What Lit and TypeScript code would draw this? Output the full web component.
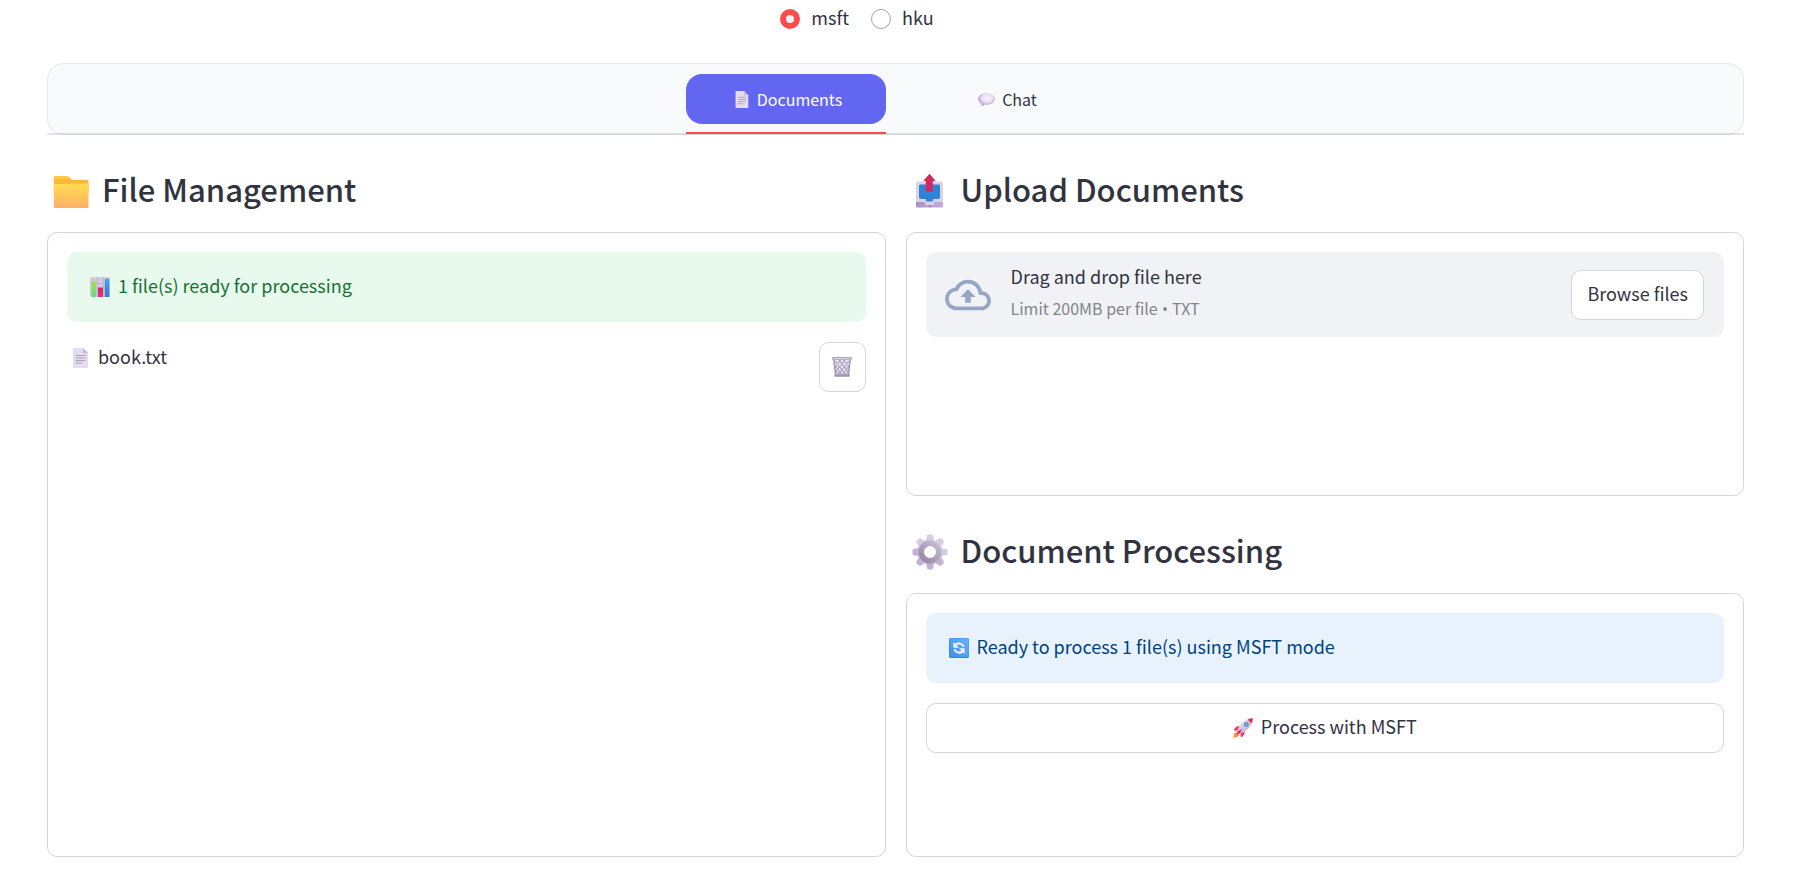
import { LitElement, html, css, svg } from "lit";
import { customElement, state } from "lit/decorators.js";
import { classMap } from "lit/directives/class-map.js";

const pageIcon = html`<svg class="icon" viewBox="0 0 20 20" aria-hidden="true">
  <path d="M3 0h10l5 5v15H3z" fill="#e6dcf0" />
  <path d="M13 0l5 5h-5z" fill="#c6bcd0" />
  <path d="M6 7.500h9M6 10h9M6 12.500h9M6 15h5.500" stroke="#aba0b6" stroke-width="1" stroke-linecap="round" />
</svg>`;

const bubbleIcon = html`<svg class="icon" viewBox="0 0 20 20" aria-hidden="true">
  <defs>
    <radialGradient id="bubble" cx=".55" cy=".4" r=".62">
      <stop offset="0" stop-color="#f8f2fc" /><stop offset=".5" stop-color="#e9dff3" /><stop offset="1" stop-color="#a78fd0" />
    </radialGradient>
  </defs>
  <path d="M10 2.500c5.400 0 9.800 2.800 9.800 6.800s-4.400 6.800-9.800 6.800c-.8 0-1.600 0-2.300-.2-.9 1-2.300 1.800-3.700 1.700.4-.7.6-1.700.4-2.700C1.800 13.700.2 11.800.2 9.300.2 5.300 4.600 2.500 10 2.500z" fill="url(#bubble)" />
</svg>`;

const folderIcon = html`<svg class="icon-lg" viewBox="0 0 36 36" aria-hidden="true">
  <defs>
    <linearGradient id="folder" x1="0" y1="0" x2="0" y2="1">
      <stop offset="0" stop-color="#ffdc50" /><stop offset="1" stop-color="#ffb067" />
    </linearGradient>
  </defs>
  <path d="M2 3h11.500c1 0 1.700.4 2.400 1.100L19 7h15c1 0 1.500.6 1.500 1.500V21H.8V4.500C.8 3.600 1.200 3 2 3z" fill="#fcb83c" />
  <path d="M2 3h11.500c1 0 1.700.4 2.400 1.100L18 6H.8V4.500C.8 3.600 1.200 3 2 3z" fill="#ffca4a" />
  <path d="M2 11h14l3-.4h15.500c.7 0 1 .4 1 1V33.500c0 1-.6 1.500-1.500 1.500H2.300c-.9 0-1.500-.5-1.500-1.500V12c0-.6.500-1 1.200-1z" fill="url(#folder)" />
</svg>`;

const outboxIcon = html`<svg class="icon-lg" viewBox="0 0 36 36" aria-hidden="true">
  <defs>
    <linearGradient id="tray" x1="0" y1="0" x2="1" y2="0">
      <stop offset="0" stop-color="#a68fbc" /><stop offset=".45" stop-color="#bba3d8" /><stop offset=".5" stop-color="#9c86b4" /><stop offset=".6" stop-color="#bba3d8" /><stop offset="1" stop-color="#c2a9e0" />
    </linearGradient>
    <linearGradient id="up" x1="0" y1="0" x2="1" y2="0">
      <stop offset="0" stop-color="#e3243c" /><stop offset="1" stop-color="#c62a86" />
    </linearGradient>
  </defs>
  <path d="M4 24h27v9c0 1-.8 1.600-1.600 1.600H5.600C4.700 34.600 4 34 4 33z" fill="url(#tray)" />
  <path d="M6 8.500h23c1.300 0 2 .8 2 2V29H22v1.500c0 .8-.6 1.500-1.500 1.500h-6c-.9 0-1.500-.7-1.500-1.500V29H4V10.500c0-1.200.8-2 2-2z" fill="#d9d3e2" />
  <path d="M9 11.500h17.500c1 0 1.500.6 1.500 1.500v11c0 1.200-.8 2-2 2h-5v1c0 1-.5 1.500-1.300 1.500h-4.400c-.8 0-1.300-.5-1.300-1.500v-1H9c-1.200 0-2-.8-2-2V13c0-.9.7-1.500 2-1.500z" fill="#2f84d6" />
  <path d="M17.500.8l6.300 7.200h-3v10.500h-7V8h-2.600z" fill="url(#up)" />
</svg>`;

const gearAngles = [0, 45, 90, 135, 180, 225, 270, 315];
const gearIcon = html`<svg class="icon-lg" viewBox="0 0 36 36" aria-hidden="true">
  <defs>
    <linearGradient id="gear" gradientUnits="userSpaceOnUse" x1="28" y1="4" x2="8" y2="32">
      <stop offset="0" stop-color="#dcd4e8" /><stop offset="1" stop-color="#b9a4d2" />
    </linearGradient>
    <linearGradient id="hub" gradientUnits="userSpaceOnUse" x1="26" y1="8" x2="9" y2="27">
      <stop offset="0" stop-color="#c9c0d4" /><stop offset="1" stop-color="#95859f" />
    </linearGradient>
  </defs>
  ${gearAngles.map((a) => svg`<path transform="rotate(${a} 18 18)" fill=${a < 100 || a === 315 ? "#d6cde4" : "#c3b1d9"} d="M13.700 9l1-6.500c.2-1.300 1-2 1.900-2h2.800c.9 0 1.700.7 1.900 2l1 6.500z" />`)}
  <circle cx="18" cy="18" r="9.500" fill="none" stroke="url(#gear)" stroke-width="6" />
  <circle cx="18" cy="18" r="8.600" fill="none" stroke="url(#hub)" stroke-width="5.600" />
  <circle cx="18" cy="18" r="5.800" fill="#fff" />
</svg>`;

const chartIcon = html`<svg class="icon" viewBox="0 0 20 20" aria-hidden="true">
  <defs>
    <linearGradient id="bar-a" x1="0" y1="0" x2="0" y2="1"><stop offset="0" stop-color="#a5dd4e" /><stop offset="1" stop-color="#5fe08c" /></linearGradient>
    <linearGradient id="bar-b" x1="0" y1="0" x2="0" y2="1"><stop offset="0" stop-color="#c52a6c" /><stop offset="1" stop-color="#f0356f" /></linearGradient>
    <linearGradient id="bar-c" x1="0" y1="0" x2="0" y2="1"><stop offset="0" stop-color="#3fa4f5" /><stop offset="1" stop-color="#3a78d0" /></linearGradient>
  </defs>
  <rect width="20" height="20" rx="1.500" fill="#d3cbdc" />
  <path d="M0 6.500h20M0 13h20M7 0v20M13.500 0v20" stroke="#b8afc2" stroke-width=".7" />
  <rect x="1.500" y="4.500" width="4.500" height="15.500" fill="url(#bar-a)" />
  <rect x="8" y="10.500" width="5" height="9.500" fill="url(#bar-b)" />
  <rect x="14.800" y="1.800" width="4.500" height="18.200" fill="url(#bar-c)" />
</svg>`;

const trashIcon = html`<svg class="icon" viewBox="0 0 20 20" aria-hidden="true">
  <path d="M1.500 2h17l-2 16.500h-13z" fill="#e9e3f0" />
  <path d="M3 4l11 14M7 3l9.500 12M11.500 3L17 10M3.500 9l7 9.500M4 14l3 4M17 4L6 18M13 3L3.500 15M8.500 3L3 10M16.500 9.500L10 18.500M16 14.500l-3 4" stroke="#a99dbb" stroke-width="1.100" fill="none" />
  <path d="M1.800 2.500l1.900 16M18.200 2.500l-1.900 16" stroke="#9a8fad" stroke-width="1.400" />
  <rect x="0" y="0" width="20" height="2.800" rx="1.200" fill="#a9a2b1" />
  <rect x="1.500" y=".9" width="17" height="1" fill="#dbd6e0" />
  <rect x="2.300" y="17.600" width="15.600" height="2.200" rx="1" fill="#9d93ab" />
</svg>`;

const refreshIcon = html`<svg class="icon" viewBox="0 0 20 20" aria-hidden="true">
  <defs>
    <linearGradient id="tile" x1="1" y1="0" x2="0" y2="1"><stop offset="0" stop-color="#64b4ff" /><stop offset="1" stop-color="#3f8fe8" /></linearGradient>
  </defs>
  <rect width="20" height="20" rx="1.800" fill="#3a7fd6" />
  <rect x=".5" y=".3" width="19.200" height="18.700" rx="1.600" fill="url(#tile)" />
  <path d="M6.500 6.700C9 4.600 12.800 5 14.600 8.600" fill="none" stroke="#f4efff" stroke-width="2.200" />
  <path d="M4.300 4v5.700H10z" fill="#f4efff" />
  <path d="M13.500 13.300C11 15.400 7.200 15 5.400 11.400" fill="none" stroke="#f4efff" stroke-width="2.200" />
  <path d="M15.700 16v-5.700H10z" fill="#f4efff" />
</svg>`;

const rocketIcon = html`<svg class="icon" viewBox="0 0 20 20" aria-hidden="true">
  <defs>
    <linearGradient id="hull" x1="0" y1="0" x2="1" y2="1"><stop offset="0" stop-color="#eee6f4" /><stop offset="1" stop-color="#b9a8c9" /></linearGradient>
    <linearGradient id="flame" x1="1" y1="0" x2="0" y2="1"><stop offset="0" stop-color="#f5603c" /><stop offset="1" stop-color="#ffb53c" /></linearGradient>
  </defs>
  <path d="M3.200 14.200L6 17c-1 2.200-3.200 2.800-5.800 2.900C0 17.500 1 15 3.200 14.200z" fill="url(#flame)" />
  <path d="M7 8.500c-3-.6-5 .8-6.200 4l4.200.2zM11.500 13c.6 3-.8 5-3.500 6.500L7.300 15z" fill="#f5346c" />
  <path d="M4 13.500C6 7 11 2.200 16 .9L19.100 4C17.800 9 13 14 6.500 16z" fill="url(#hull)" />
  <path d="M14.500 1.500C16.500.5 18.500 0 19.800.2 20 1.500 19.500 3.500 18.500 5.500z" fill="#ee2f55" />
  <circle cx="13.300" cy="6.500" r="2.300" fill="#5b7fb4" /><circle cx="13.300" cy="6.500" r="1.500" fill="#4db2f5" />
  <path d="M9 11L4.500 13.200 3.800 16.200 7 15.500z" fill="#e52a66" />
</svg>`;

const cloudIcon = html`<svg class="cloud" viewBox="0 0 24 24" aria-hidden="true">
  <path fill="currentColor" d="M19.350 10.040A7.490 7.490 0 0 0 12 4C9.110 4 6.600 5.640 5.350 8.040A5.994 5.994 0 0 0 0 14c0 3.310 2.690 6 6 6h13c2.760 0 5-2.240 5-5 0-2.640-2.050-4.780-4.650-4.960zM19 18H6c-2.210 0-4-1.790-4-4 0-2.050 1.530-3.760 3.560-3.970l1.070-.11.5-.95A5.469 5.469 0 0 1 12 6c2.620 0 4.880 1.860 5.390 4.430l.3 1.500 1.530.11A2.980 2.980 0 0 1 22 15c0 1.650-1.350 3-3 3zM8 13h2.550v3h2.900v-3H16l-4-4z" />
</svg>`;

@customElement("app-root")
export class AppRoot extends LitElement {
  static styles = css`
    :host {
      display: block;
      background: #fff;
      color: #31333f;
      font: 400 18px/28px "Noto Sans CJK SC", "Noto Sans", sans-serif;
    }
    * { box-sizing: border-box; }
    button { font: inherit; color: inherit; cursor: pointer; margin: 0; }
    svg { flex: none; display: block; }
    .page { padding: 3px 61px 31px 47px; }
    /* The font sits low in its line box; the padding evens that out. */
    .label { display: block; padding-bottom: 4px; }

    .modes {
      display: flex;
      justify-content: center;
      gap: 22px;
      margin: 0;
      padding: 0 77px 28px 0;
      border: 0;
    }
    .mode { display: flex; align-items: center; gap: 11px; cursor: pointer; }
    .mode-input {
      appearance: none;
      width: 20px;
      height: 20px;
      margin: 0;
      border: 1px solid #a3a4a9;
      border-radius: 50%;
      background: #fff;
    }
    .mode-input:checked { border: 6px solid #ff4b4b; background: #f0f2f6; }

    .tabs-wrap { position: relative; }
    .tabs-wrap::after {
      content: "";
      position: absolute;
      inset: auto 0 0 0;
      height: 2px;
      background: rgba(49, 51, 63, 0.12);
    }
    .tabs {
      display: flex;
      justify-content: center;
      gap: 20px;
      padding: 10px;
      border: 1px solid #e2e8f0;
      border-radius: 16px;
      background: #f8fafc;
    }
    .tab {
      position: relative;
      display: flex;
      align-items: center;
      justify-content: center;
      gap: 7px;
      width: 200px;
      height: 50px;
      padding: 0 0 0 4px;
      border: 0;
      border-radius: 16px;
      background: transparent;
      font-size: 16px;
    }
    .tab .icon { width: 17px; height: 17px; }
    .tab.active { background: #6366f1; color: #fff; }
    .tab.active::after {
      content: "";
      position: absolute;
      z-index: 1;
      inset: auto 0 -10px 0;
      height: 2px;
      background: #ff4b4b;
    }

    .columns { display: grid; grid-template-columns: 1fr 1fr; gap: 20px; }
    .column { display: flex; flex-direction: column; min-width: 0; }
    .title {
      display: flex;
      align-items: center;
      gap: 13px;
      margin: 0;
      padding: 35px 0 20px 6px;
      font-size: 31px;
      line-height: 38px;
      font-weight: 500;
    }
    .icon { width: 20px; height: 20px; }
    .icon-lg { width: 36px; height: 36px; }
    .card {
      display: flex;
      flex-direction: column;
      gap: 20px;
      min-height: 264px;
      padding: 19px;
      border: 1px solid #d6d6d9;
      border-radius: 10px;
    }
    .card.fill { flex: 1; }
    .line { display: flex; align-items: center; gap: 8px; padding-left: 3px; }
    .alert { padding: 19px 20px 19px 23px; border-radius: 10px; }
    .success { background: #e8f9ee; color: #177233; }
    .info { background: #e8f2fc; color: #004280; }
    .file { display: flex; align-items: flex-start; justify-content: space-between; }
    .btn {
      display: flex;
      align-items: center;
      justify-content: center;
      gap: 8px;
      height: 50px;
      padding: 0 15px;
      border: 1px solid #d6d6d9;
      border-radius: 10px;
      background: #fff;
      white-space: nowrap;
    }
    .btn.small { width: 47px; padding: 0; }
    .drop {
      display: flex;
      align-items: center;
      gap: 20px;
      height: 85px;
      padding: 0 20px 0 19px;
      border-radius: 10px;
      background: #f0f2f6;
    }
    .cloud { width: 46px; height: 46px; color: #97a6c3; }
    .drop-text { flex: 1; display: flex; flex-direction: column; }
    .drop-hint { font-size: 16px; color: #83858c; }
    .dot { font-family: "Open Sans", sans-serif; }
  `;

  @state() private mode = "msft";
  @state() private tab = "Documents";

  private renderMode(name: string) {
    return html`<label class="mode">
      <input class="mode-input" type="radio" name="mode" .checked=${this.mode === name} @change=${() => (this.mode = name)} />
      <span class="label">${name}</span>
    </label>`;
  }

  private renderTab(name: string, icon: unknown) {
    const active = this.tab === name;
    return html`<button
      class=${classMap({ tab: true, active })}
      role="tab"
      aria-selected=${active ? "true" : "false"}
      @click=${() => (this.tab = name)}
    >${icon}<span>${name}</span></button>`;
  }

  render() {
    const label = this.mode.toUpperCase();
    return html`<main class="page">
      <fieldset class="modes" aria-label="Mode">${this.renderMode("msft")}${this.renderMode("hku")}</fieldset>
      <div class="tabs-wrap">
        <div class="tabs" role="tablist">
          ${this.renderTab("Documents", pageIcon)}${this.renderTab("Chat", bubbleIcon)}
        </div>
      </div>
      <div class="columns">
        <section class="column">
          <h3 class="title">${folderIcon}<span class="label">File Management</span></h3>
          <div class="card fill">
            <div class="alert success line" role="status">${chartIcon}<span class="label">1 file(s) ready for processing</span></div>
            <div class="file">
              <div class="line">${pageIcon}<span class="label">book.txt</span></div>
              <button class="btn small" aria-label="Delete book.txt">${trashIcon}</button>
            </div>
          </div>
        </section>
        <div class="column">
          <section>
            <h3 class="title">${outboxIcon}<span class="label">Upload Documents</span></h3>
            <div class="card">
              <div class="drop">
                ${cloudIcon}
                <div class="drop-text">
                  <span class="label">Drag and drop file here</span>
                  <span class="drop-hint label">Limit 200MB per file<span class="dot"> • </span>TXT</span>
                </div>
                <button class="btn"><span class="label">Browse files</span></button>
              </div>
            </div>
          </section>
          <section>
            <h3 class="title">${gearIcon}<span class="label">Document Processing</span></h3>
            <div class="card">
              <div class="alert info line" role="status">${refreshIcon}<span class="label">Ready to process 1 file(s) using ${label} mode</span></div>
              <button class="btn">${rocketIcon}<span class="label">Process with ${label}</span></button>
            </div>
          </section>
        </div>
      </div>
    </main>`;
  }
}
